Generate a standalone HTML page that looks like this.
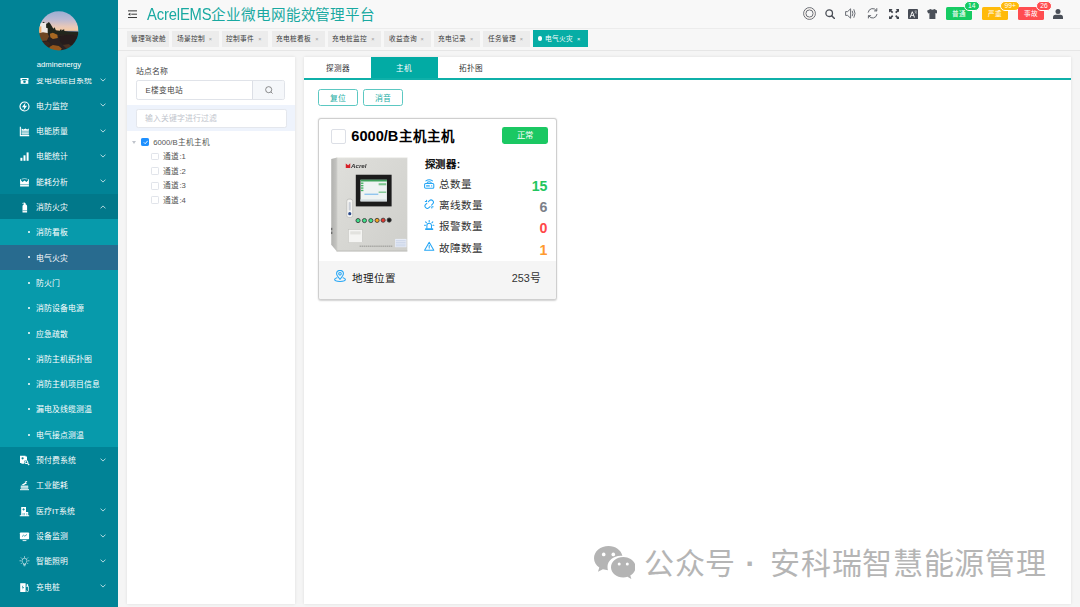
<!DOCTYPE html>
<html lang="zh-CN">
<head>
<meta charset="utf-8">
<title>AcrelEMS企业微电网能效管理平台</title>
<style>
*{box-sizing:border-box;margin:0;padding:0}
html,body{width:1080px;height:607px;overflow:hidden}
body{position:relative;background:#f5f5f5;font-family:"Liberation Sans",sans-serif;color:#303133;-webkit-font-smoothing:antialiased}
.abs{position:absolute}
/* ---------- sidebar ---------- */
#side{position:absolute;left:0;top:0;width:118px;height:607px;background:#018396;overflow:hidden}
#avatar{position:absolute;left:39.2px;top:11px;width:39.6px;height:39.6px}
#uname{position:absolute;left:0;top:60.1px;width:118px;text-align:center;color:#fff;font-size:7.7px;line-height:10px}
#menuclip{position:absolute;left:0;top:78.4px;width:118px;height:530px;overflow:hidden}
#menu{position:absolute;left:0;top:-11px;width:118px;list-style:none}
#menu li{position:relative;height:25.3125px;line-height:25.3125px;color:#fff;font-weight:500;font-size:7.875px;white-space:nowrap}
#menu li .ic{position:absolute;left:18.5px;top:7.9px;width:11px;height:11px}
#menu li .tx{position:absolute;left:36px;top:1px}
#menu li .ar{position:absolute;left:100.4px;top:10.7px;width:6px;height:4px}
#menu li.open{background:#01788a}
#menu li.sub{background:#079aab}
#menu li.sub .tx{left:36px}
#menu li.sub .dot{position:absolute;left:27.6px;top:11.8px;width:2px;height:2px;border-radius:50%;background:#fff}
#menu li.act{background:#286b8f}
/* ---------- header ---------- */
#head{position:absolute;left:118px;top:0;width:962px;height:28.5px;background:#f8f8f8;border-bottom:1px solid #ececec}
#title{position:absolute;left:29px;top:4.5px;font-size:14.6px;line-height:20px;color:#19a9a1;white-space:nowrap;letter-spacing:-.15px}
#tabs{position:absolute;left:118px;top:28.5px;width:962px;height:22px;background:#f7f7f7;border-bottom:1px solid #e6e6e6}
.tab{position:absolute;top:2px;height:16.4px;line-height:16.4px;background:#ececec;font-size:6.7px;color:#3a3a3a;white-space:nowrap;padding-left:4.5px}
.tab i{font-style:normal;color:#9a9a9a;font-size:5.6px;margin-left:4px}
.tab.on{background:#06ada5;color:#fff}
.tab.on i{color:#fff}
/* ---------- panels ---------- */
#lp{position:absolute;left:126.8px;top:56.9px;width:168.3px;height:547.2px;background:#fff;box-shadow:0 0 3px rgba(0,0,0,.10)}
#rp{position:absolute;left:304.4px;top:56.7px;width:767px;height:547.4px;background:#fff;box-shadow:0 0 3px rgba(0,0,0,.10)}

/* header icons */
#head svg{position:absolute}
.bdg{position:absolute;top:6.9px;height:13px;width:25.7px;border-radius:1.6px;color:#fff;font-size:6.6px;line-height:13px;text-align:center}
.pill{position:absolute;top:1.4px;height:9.4px;border-radius:5px;border:.7px solid #fff;color:#fff;font-size:6.7px;line-height:8.1px;text-align:center;padding:0 3.1px}
/* left panel */
#lp .lab{position:absolute;left:9px;top:10.6px;font-size:7.875px;line-height:10px;color:#444}
#lp .in1{position:absolute;left:9px;top:22.8px;width:149px;height:20.2px;border:.6px solid #e0e3e9;border-radius:2.3px;background:#fff;overflow:hidden}
#lp .in1 .v{position:absolute;left:8.6px;top:.6px;line-height:19.4px;font-size:7.7px;color:#444}
#lp .in1 .btn{position:absolute;right:0;top:0;width:32px;height:20px;background:#f5f7fa;border-left:.6px solid #dcdfe6}
#lp .band{position:absolute;left:0;top:48.6px;width:168.5px;height:25.6px;background:#eef3fc}
#lp .in2{position:absolute;left:9px;top:3.1px;width:151.4px;height:19.7px;border:.6px solid #e4e7ed;border-radius:2.3px;background:#fff;font-size:7.875px;line-height:18px;color:#c0c4cc;padding-left:8.6px}
.trow{position:absolute;left:0;width:168px;height:14.6px;line-height:14.6px;font-size:7.7px;color:#555;white-space:nowrap}
.trow .cb{position:absolute;top:3.4px;width:7.8px;height:7.8px;border:.5px solid #e1e4ea;border-radius:1.2px;background:#fff}
.trow .cb.ck{background:#1e90ff;border-color:#1e90ff}
.trow .t{position:absolute;top:1.1px}
/* right panel */
#rp .tb{position:absolute;top:0;height:21.6px;width:67px;padding-top:1.5px;line-height:22.6px;text-align:center;font-size:7.6px;color:#303133}
#rp .tb.on{background:#02aba4;color:#fff}
#rp .tl{position:absolute;left:0;top:21.4px;width:767px;height:1.8px;background:#0fb0a9}
.pbtn{position:absolute;top:32.6px;height:17.2px;width:39.8px;border:.7px solid #5cc8c2;border-radius:2.6px;color:#1aada5;font-size:7.875px;line-height:17.2px;text-align:center;background:#fff}
/* card */
#card{position:absolute;left:13.9px;top:61px;width:238.4px;height:182px;border:.8px solid #cfcfcf;border-radius:3px;background:#fff;box-shadow:0 .6px 1.6px rgba(0,0,0,.18);overflow:hidden}
#card .ccb{position:absolute;left:12px;top:10px;width:15px;height:15px;border:.7px solid #dcdfe6;border-radius:2px;background:#fff}
#card .ttl{position:absolute;left:32px;top:7.5px;font-size:14.6px;font-weight:bold;color:#000;line-height:20px;white-space:nowrap}
#card .tag{position:absolute;left:183px;top:8.4px;width:45.7px;height:17px;border-radius:2.4px;background:#1bc863;color:#fff;font-size:8.4px;line-height:17px;text-align:center}
#card .dt{position:absolute;left:105.4px;top:39px;font-size:10.4px;letter-spacing:.7px;font-weight:bold;color:#111;line-height:14px}
.row{position:absolute;left:105.4px;width:123.2px;height:21.4px}
.row svg{position:absolute;left:-.5px;top:5px;width:10.4px;height:10.4px}
.row .k{position:absolute;left:14.5px;top:2.9px;font-family:"Liberation Serif",serif;font-size:10.6px;line-height:15px;color:#333;white-space:nowrap}
.row .n{position:absolute;right:.4px;top:2.8px;font-size:14.2px;font-weight:bold;line-height:18px}
#card .ft{position:absolute;left:0;top:142.5px;width:238px;height:39.5px;background:#f5f5f5}
#card .ft svg{position:absolute;left:15.2px;top:9.1px;width:12px;height:12px}
#card .ft .k{position:absolute;left:32.6px;top:9.9px;font-family:"Liberation Serif",serif;font-size:10.6px;line-height:15px;color:#222}
#card .ft .v{position:absolute;right:16.6px;top:10px;font-size:10.8px;line-height:15px;color:#333}
/* watermark */
#wm{position:absolute;left:644.1px;top:546.3px;font-size:30px;line-height:36px;color:#b5b5b5;white-space:nowrap;letter-spacing:.7px}
#wmi{position:absolute;left:593.6px;top:545.6px;width:41.6px;height:33.4px}
</style>
</head>
<body>

<!-- ================= SIDEBAR ================= -->
<div id="side">
  <svg id="avatar" viewBox="0 0 40 40">
    <defs>
      <clipPath id="avc"><circle cx="20" cy="20" r="19.8"/></clipPath>
      <linearGradient id="sky" x1="0" y1="0" x2="0" y2="1">
        <stop offset="0" stop-color="#9aaed2"/><stop offset=".4" stop-color="#bcbad2"/><stop offset=".7" stop-color="#e8c8b8"/><stop offset=".9" stop-color="#f8cba0"/><stop offset="1" stop-color="#f0b888"/>
      </linearGradient>
      <filter id="avb" x="-10%" y="-10%" width="120%" height="120%"><feGaussianBlur stdDeviation=".8"/></filter>
    </defs>
    <g clip-path="url(#avc)">
      <rect width="40" height="22.5" fill="url(#sky)"/>
      <g filter="url(#avb)" transform="translate(0 1.4)">
        <rect x="26" y="18.600" width="14" height="2" fill="#7d8ea8"/>
        <rect x="-2" y="19.600" width="44" height="22" fill="#2b2320"/>
        <path d="M2 20L3.500 10.500L5 9.500L6.500 12L8.500 11L10 9.800L11.500 11.500L13 14L14.500 16.500L15.800 15L17 18L21 18.600L21.500 17.200H22.800V18.600L24.200 17.400H25.600V18.800L30 19.200L40 19.800V22H2Z" fill="#23261f"/>
        <path d="M.6 12L2.400 10.800H7.200V15.500L8.800 16V21H.6Z" fill="#efe9e6"/>
        <path d="M0 14.500L2.400 14V20.500H0Z" fill="#f2b070"/>
        <path d="M0 21L4 20L8.500 20.800L10 24L8 28.500L3 29L0 27Z" fill="#6e4424"/>
        <path d="M11 21.500L14 20.500L18.500 22.500L19 26L14 27L11.500 25Z" fill="#a86824"/>
        <path d="M10.500 35L14 33L20 34L23 36.500L21 40H11Z" fill="#94561e"/>
        <path d="M20 24L30 22.500L40 24V33L30 36L22 31Z" fill="#251e1c"/>
        <path d="M24 33L30 32L33 34L28 37Z" fill="#4a3020"/>
        <path d="M3 30L9 29.500L12 32L8 36L4 35Z" fill="#3a261a"/>
      </g>
    </g>
  </svg>
  <div id="uname">adminenergy</div>
  <div id="menuclip">
  <ul id="menu">
    <li><svg class="ic" viewBox="0 0 11 11"><path d="M1.300 4.200Q1.300 2.600 3 2.600H8Q9.700 2.600 9.700 4.200L9.400 5H7.800V4H3.200V5H1.600Z" fill="#fff"/><path d="M1.700 5.200H9.300V8.800H1.700Z" fill="#fff"/><circle cx="5.500" cy="6.800" r="1.300" fill="#018396"/></svg><span class="tx">变电站综自系统</span><svg class="ar" viewBox="0 0 6 4"><path d="M.5 .6L3 3.100L5.500 .6" fill="none" stroke="#fff" stroke-width=".7"/></svg></li>
    <li><svg class="ic" viewBox="0 0 11 11"><circle cx="5.500" cy="5.500" r="4.500" fill="none" stroke="#fff" stroke-width="1.2"/><path d="M6.600 1.500L2.900 6.200H5.200L4.400 9.500L8.100 4.800H5.800Z" fill="#fff"/></svg><span class="tx">电力监控</span><svg class="ar" viewBox="0 0 6 4"><path d="M.5 .6L3 3.100L5.500 .6" fill="none" stroke="#fff" stroke-width=".7"/></svg></li>
    <li><svg class="ic" viewBox="0 0 11 11"><path d="M.8 .8H1.900V9.100H10.200V10.200H.8Z" fill="#fff"/><path d="M2.600 2.400L4.500 3.600L6.400 2.600L8.200 3.400L9.800 2.400V8.400H2.600Z" fill="#fff"/><path d="M2.600 5.200H9.800M2.600 6.900H9.800" stroke="#018396" stroke-width=".6"/></svg><span class="tx">电能质量</span><svg class="ar" viewBox="0 0 6 4"><path d="M.5 .6L3 3.100L5.500 .6" fill="none" stroke="#fff" stroke-width=".7"/></svg></li>
    <li><svg class="ic" viewBox="0 0 11 11"><rect x="1.400" y="6.800" width="2" height="3" fill="#fff"/><rect x="4.500" y="4.300" width="2" height="5.500" fill="#fff"/><rect x="7.600" y="1.400" width="2" height="8.400" fill="#fff"/></svg><span class="tx">电能统计</span><svg class="ar" viewBox="0 0 6 4"><path d="M.5 .6L3 3.100L5.500 .6" fill="none" stroke="#fff" stroke-width=".7"/></svg></li>
    <li><svg class="ic" viewBox="0 0 11 11"><path d="M1.100 2.200H2V3.600L3.600 5L5.500 3.400L7.400 5L9 3.600V2.200H9.900V9.400H1.100Z" fill="#fff"/><path d="M1.100 7.600H9.900" stroke="#018396" stroke-width=".5"/><path d="M2.600 2.200L5.500 1.500L8.400 2.200" stroke="#fff" stroke-width=".6" fill="none"/></svg><span class="tx">能耗分析</span><svg class="ar" viewBox="0 0 6 4"><path d="M.5 .6L3 3.100L5.500 .6" fill="none" stroke="#fff" stroke-width=".7"/></svg></li>
    <li class="open"><svg class="ic" viewBox="0 0 11 11"><path d="M3.300 .9L5.500 .4L6.600 1.300V2.200Q8.100 2.600 8.100 4.200V10.400H3.500V4.200Q3.500 2.600 5 2.200V1.500L3.500 1.700Z" fill="#fff"/><path d="M3.500 8.600H8.100" stroke="#01788a" stroke-width=".5"/></svg><span class="tx">消防火灾</span><svg class="ar" viewBox="0 0 6 4"><path d="M.5 3.400L3 .9L5.500 3.400" fill="none" stroke="#fff" stroke-width=".7"/></svg></li>
    <li class="sub"><span class="dot"></span><span class="tx">消防看板</span></li>
    <li class="sub act"><span class="dot"></span><span class="tx">电气火灾</span></li>
    <li class="sub"><span class="dot"></span><span class="tx">防火门</span></li>
    <li class="sub"><span class="dot"></span><span class="tx">消防设备电源</span></li>
    <li class="sub"><span class="dot"></span><span class="tx">应急疏散</span></li>
    <li class="sub"><span class="dot"></span><span class="tx">消防主机拓扑图</span></li>
    <li class="sub"><span class="dot"></span><span class="tx">消防主机项目信息</span></li>
    <li class="sub"><span class="dot"></span><span class="tx">漏电及线缆测温</span></li>
    <li class="sub"><span class="dot"></span><span class="tx">电气接点测温</span></li>
    <li><svg class="ic" viewBox="0 0 11 11"><path d="M1 .8H6.600V1.600H8V5.200Q5.500 4.600 5 7Q4.900 8 5.400 8.800H2.400V8H1Z" fill="#fff"/><circle cx="7.400" cy="7.200" r="1.900" fill="#fff"/><path d="M8.600 8.400L10.200 10" stroke="#fff" stroke-width="1.200"/><circle cx="3.600" cy="3.300" r="1.100" fill="#018396"/><circle cx="7.400" cy="7.200" r=".9" fill="#018396"/></svg><span class="tx">预付费系统</span><svg class="ar" viewBox="0 0 6 4"><path d="M.5 .6L3 3.100L5.500 .6" fill="none" stroke="#fff" stroke-width=".7"/></svg></li>
    <li><svg class="ic" viewBox="0 0 11 11"><path d="M1 9.200H10V10.200H1Z" fill="#fff"/><path d="M1.800 5.600H9.200V8.600H1.800Z" fill="#fff"/><path d="M2.600 4.800L6.800 2.200L8 3.200L4.400 5.200Z" fill="#fff"/><path d="M5.600 1.800L7.800 .9L8.300 1.700L6.200 2.700Z" fill="#fff"/><path d="M1.800 7.100H9.200" stroke="#018396" stroke-width=".5"/></svg><span class="tx">工业能耗</span></li>
    <li><svg class="ic" viewBox="0 0 11 11"><path d="M2.200 .9H7V6H9.200V9.300H10.200V10.200H.8V9.300H2.200Z" fill="#fff"/><path d="M4.600 2.200V4.600M3.400 3.400H5.800" stroke="#018396" stroke-width=".8"/><path d="M4 7V9.300M5.400 7V9.300M7.800 7.200V9.300" stroke="#018396" stroke-width=".5"/></svg><span class="tx">医疗IT系统</span><svg class="ar" viewBox="0 0 6 4"><path d="M.5 .6L3 3.100L5.500 .6" fill="none" stroke="#fff" stroke-width=".7"/></svg></li>
    <li><svg class="ic" viewBox="0 0 11 11"><rect x=".9" y="1.500" width="9.200" height="6.800" rx=".8" fill="#fff"/><path d="M3.600 9.600H7.400" stroke="#fff" stroke-width=".9"/><path d="M3 5.600L4.600 4.200L5.800 5.200L8 3.400" stroke="#018396" stroke-width=".7" fill="none"/></svg><span class="tx">设备监测</span><svg class="ar" viewBox="0 0 6 4"><path d="M.5 .6L3 3.100L5.500 .6" fill="none" stroke="#fff" stroke-width=".7"/></svg></li>
    <li><svg class="ic" viewBox="0 0 11 11"><g fill="none" stroke="#fff" stroke-width=".6" stroke-linecap="round"><path d="M4.300 7.800V7Q3 6.200 3 4.800A2.500 2.500 0 0 1 8 4.800Q8 6.200 6.700 7V7.800Z"/><path d="M4.600 8.800H6.400M5.100 9.800H5.900"/><path d="M5.500 .6V1.400M2.200 1.800L2.800 2.400M8.800 1.800L8.200 2.400M.9 4.800H1.700M10.100 4.800H9.300M2.200 7.600L2.800 7M8.800 7.600L8.200 7"/></g></svg><span class="tx">智能照明</span><svg class="ar" viewBox="0 0 6 4"><path d="M.5 .6L3 3.100L5.500 .6" fill="none" stroke="#fff" stroke-width=".7"/></svg></li>
    <li><svg class="ic" viewBox="0 0 11 11"><path d="M1.200 1.200H6.600V10H1.200Z" fill="#fff"/><path d="M4.200 3L2.800 5.600H3.900L3.400 7.800L5 5H3.900Z" fill="#018396"/><path d="M7.400 4.400H9.400V8.600Q9.400 9.600 8.400 9.600T7.400 8.600" fill="none" stroke="#fff" stroke-width=".8"/><path d="M8.400 2.200V4.400" stroke="#fff" stroke-width="1.400"/></svg><span class="tx">充电桩</span><svg class="ar" viewBox="0 0 6 4"><path d="M.5 .6L3 3.100L5.500 .6" fill="none" stroke="#fff" stroke-width=".7"/></svg></li>
  </ul>
  </div>
</div>

<!-- ================= HEADER ================= -->
<div id="head">
  <div id="title"><span style="display:inline-block;font-size:15.7px;transform:scaleX(.94);transform-origin:0 50%;margin-right:-4.1px">AcrelEMS</span>企业微电网能效管理平台</div>

  <!-- hamburger -->
  <svg style="left:9.8px;top:10.2px;width:9.2px;height:8.4px" viewBox="0 0 9.4 8.4"><g stroke="#333" stroke-width="1" fill="none"><path d="M0 .8H9.4M3.4 4.2H9.4M0 7.6H9.4"/></g><path d="M0 4.2L2.4 2.7V5.7Z" fill="#333"/></svg>
  <!-- lifebuoy -->
  <svg style="left:684.6px;top:7px;width:13px;height:13px" viewBox="0 0 13 13"><g fill="none" stroke="#5a5e66" stroke-width=".9"><circle cx="6.5" cy="6.5" r="5.9"/><circle cx="6.5" cy="6.5" r="3.6"/></g><g stroke="#eadfd2" stroke-width=".5" fill="none"><circle cx="6.5" cy="6.5" r="4.8"/></g></svg>
  <!-- search -->
  <svg style="left:707px;top:9px;width:10.4px;height:10.4px" viewBox="0 0 10.4 10.4"><circle cx="4.2" cy="4.2" r="3.3" fill="none" stroke="#4a4e56" stroke-width="1.3"/><path d="M6.7 6.7L9.8 9.8" stroke="#4a4e56" stroke-width="1.5" stroke-linecap="round"/></svg>
  <!-- volume -->
  <svg style="left:727.4px;top:8px;width:12px;height:11px" viewBox="0 0 12 11"><path d="M.6 3.6H2.6L5.6 .8V10.2L2.6 7.4H.6Z" fill="none" stroke="#5a5e66" stroke-width=".9" stroke-linejoin="round"/><path d="M7.4 3.2Q8.6 5.5 7.4 7.8M9 1.6Q11.2 5.5 9 9.4" fill="none" stroke="#5a5e66" stroke-width=".9" stroke-linecap="round"/></svg>
  <!-- refresh -->
  <svg style="left:749.2px;top:8.4px;width:11.2px;height:10.6px" viewBox="0 0 11.2 10.6"><g fill="none" stroke="#5a5e66" stroke-width=".95" stroke-linecap="round"><path d="M1.2 4.2A4.5 4.5 0 0 1 9.4 2.6"/><path d="M10 6.4A4.5 4.5 0 0 1 1.8 8"/><path d="M9.8 .6V2.9H7.5M1.4 10V7.7H3.7"/></g></svg>
  <!-- fullscreen -->
  <svg style="left:770.6px;top:8.8px;width:10.4px;height:10.4px" viewBox="0 0 10.4 10.4"><g fill="#3f434b"><path d="M0 0H3.6L2.4 1.2L4.3 3.1L3.1 4.3L1.2 2.4L0 3.6Z"/><path d="M10.4 0V3.6L9.2 2.4L7.3 4.3L6.1 3.1L8 1.2L6.8 0Z"/><path d="M0 10.4V6.8L1.2 8L3.1 6.1L4.3 7.3L2.4 9.2L3.6 10.4Z"/><path d="M10.4 10.4H6.8L8 9.2L6.1 7.3L7.3 6.1L9.2 8L10.4 6.8Z"/></g></svg>
  <!-- font size -->
  <svg style="left:790px;top:8.8px;width:10.2px;height:10.2px" viewBox="0 0 10.2 10.2"><rect width="10.2" height="10.2" rx="1.2" fill="#474c55"/><path d="M1.6 8.4L3.9 2.4H4.7L7 8.4H6L5.4 6.8H3.2L2.6 8.4ZM3.5 6H5.1L4.3 3.7Z" fill="#fff"/><path d="M6.6 2.2H9M7.8 1.6V2.2M7 2.9L8.7 4.6M8.7 2.9L7 4.6" stroke="#fff" stroke-width=".45" fill="none"/></svg>
  <!-- t-shirt -->
  <svg style="left:808.6px;top:8.8px;width:10.8px;height:10.2px" viewBox="0 0 10.8 10.2"><path d="M3.4 0Q5.4 1.6 7.4 0L10.8 1.8L9.6 4.6L8.4 4.1V10.2H2.4V4.1L1.2 4.6L0 1.8Z" fill="#4a4f58"/></svg>
  <!-- badges -->
  <div class="bdg" style="left:828.2px;background:#16cb63">普通</div>
  <div class="pill" style="left:845.9px;background:#16cb63">14</div>
  <div class="bdg" style="left:864px;background:#ffba0a">严重</div>
  <div class="pill" style="left:882.4px;background:#ffba0a">99+</div>
  <div class="bdg" style="left:900.2px;background:#ff4d50">事故</div>
  <div class="pill" style="left:918.2px;background:#ff4d50">26</div>
  <!-- user -->
  <svg style="left:935px;top:9px;width:10px;height:10px" viewBox="0 0 10 10"><circle cx="5" cy="2.6" r="2.5" fill="#4a4f58"/><path d="M0 10V8.4Q0 5.8 2.6 5.8H7.4Q10 5.8 10 8.4V10Z" fill="#4a4f58"/></svg>
</div>
<div id="tabs">
  <span class="tab" style="left:8.7px;width:42.6px">管理驾驶舱</span>
  <span class="tab" style="left:54.2px;width:46.7px">场景控制<i>×</i></span>
  <span class="tab" style="left:103.8px;width:46.7px">控制事件<i>×</i></span>
  <span class="tab" style="left:153.8px;width:53.4px">充电桩看板<i>×</i></span>
  <span class="tab" style="left:209.8px;width:53.4px">充电桩监控<i>×</i></span>
  <span class="tab" style="left:266px;width:46.7px">收益查询<i>×</i></span>
  <span class="tab" style="left:315.6px;width:46.7px">充电记录<i>×</i></span>
  <span class="tab" style="left:365.2px;width:46.7px">任务管理<i>×</i></span>
  <span class="tab on" style="left:415px;width:55px;padding-left:12.1px;top:1.5px;height:17.1px;line-height:17.4px"><b style="position:absolute;left:4.5px;top:6.3px;width:4.4px;height:4.4px;border-radius:50%;background:#fff;display:block"></b>电气火灾<i>×</i></span>
</div>

<!-- ================= PANELS ================= -->
<div id="lp">
  <div class="lab">站点名称</div>
  <div class="in1"><span class="v">E楼变电站</span><span class="btn"><svg style="position:absolute;left:11.8px;top:5.6px;width:8px;height:8px" viewBox="0 0 7.6 7.6"><circle cx="3.5" cy="3.5" r="2.9" fill="none" stroke="#666" stroke-width=".7"/><path d="M5.6 5.6L7.2 7.2" stroke="#666" stroke-width=".7"/></svg></span></div>
  <div class="band"><div class="in2">输入关键字进行过滤</div></div>
  <div class="trow" style="top:77.8px"><svg style="position:absolute;left:5.6px;top:6px;width:4px;height:3px" viewBox="0 0 4 3"><path d="M0 0H4L2 3Z" fill="#c0c4cc"/></svg><span class="cb ck" style="left:14.2px"><svg style="position:absolute;left:.6px;top:.8px;width:5.4px;height:4.6px" viewBox="0 0 5.4 4.6"><path d="M.8 2.3L2.2 3.7L4.7 .8" fill="none" stroke="#fff" stroke-width=".9"/></svg></span><span class="t" style="left:26.4px">6000/B主机主机</span></div>
  <div class="trow" style="top:92.3px"><span class="cb" style="left:24.2px"></span><span class="t" style="left:36.6px">通道:1</span></div>
  <div class="trow" style="top:106.9px"><span class="cb" style="left:24.2px"></span><span class="t" style="left:36.6px">通道:2</span></div>
  <div class="trow" style="top:121.5px"><span class="cb" style="left:24.2px"></span><span class="t" style="left:36.6px">通道:3</span></div>
  <div class="trow" style="top:136.1px"><span class="cb" style="left:24.2px"></span><span class="t" style="left:36.6px">通道:4</span></div>
</div>
<div id="rp">
  <div class="tb" style="left:0">探测器</div>
  <div class="tb on" style="left:66.6px">主机</div>
  <div class="tb" style="left:133.6px">拓扑图</div>
  <div class="tl"></div>
  <div class="pbtn" style="left:13.8px">复位</div>
  <div class="pbtn" style="left:58.8px">消音</div>
  <div id="card">
    <span class="ccb"></span>
    <div class="ttl">6000/B<span style="font-size:13.4px;letter-spacing:1px;margin-left:.6px">主机主机</span></div>
    <div class="tag">正常</div>
    <svg style="position:absolute;left:5.9px;top:31.8px;width:100px;height:105px" viewBox="0 0 578 607">
      <defs>
        <linearGradient id="cf" x1="0" y1="0" x2="1" y2="1"><stop offset="0" stop-color="#dfdfdb"/><stop offset="1" stop-color="#cfcfcb"/></linearGradient>
        <linearGradient id="cs" x1="0" y1="0" x2="1" y2="0"><stop offset="0" stop-color="#b2b2af"/><stop offset="1" stop-color="#c6c6c3"/></linearGradient>
        <filter id="bl" x="-5%" y="-5%" width="110%" height="110%"><feGaussianBlur stdDeviation="2.2"/></filter>
      </defs>
      <g filter="url(#bl)">
        <path d="M36 52L70 44V588L36 548Z" fill="url(#cs)"/>
        <path d="M68 44H476V586H68Z" fill="url(#cf)"/>
        <path d="M68 44H476" stroke="#f2f2ef" stroke-width="5"/>
        <path d="M68 584H476" stroke="#b8b8b4" stroke-width="5"/>
        <path d="M69 44V586" stroke="#c4c4c0" stroke-width="3"/>
        <!-- logo -->
        <path d="M120 78L134 88L146 76V104H120Z" fill="#d8232a"/>
        <text x="150" y="104" font-family="Liberation Sans, sans-serif" font-size="36" font-weight="bold" font-style="italic" fill="#333">Acrel</text>
        <!-- screen -->
        <rect x="178" y="143" width="207" height="183" fill="#1b1b1d"/>
        <rect x="205" y="172" width="153" height="125" fill="#eef3f3"/>
        <rect x="205" y="172" width="153" height="10" fill="#3ea05a"/>
        <rect x="208" y="188" width="14" height="8" fill="#45b565"/><rect x="208" y="202" width="14" height="8" fill="#45b565"/><rect x="208" y="216" width="14" height="8" fill="#45b565"/><rect x="208" y="230" width="14" height="8" fill="#45b565"/>
        <rect x="310" y="192" width="44" height="12" fill="#7cc58e"/><rect x="310" y="240" width="44" height="8" fill="#7cc58e"/>
        <rect x="228" y="252" width="80" height="8" fill="#8fc4ee"/>
        <rect x="205" y="285" width="153" height="12" fill="#d5dde0"/>
        <!-- handle -->
        <rect x="126" y="284" width="34" height="106" rx="12" fill="#f4f4f2" stroke="#a9a9a6" stroke-width="3"/>
        <rect x="137" y="300" width="12" height="50" rx="5" fill="#c9ced6"/>
        <circle cx="143" cy="368" r="9" fill="#2a4a8a"/>
        <!-- lights -->
        <g stroke="#3a3a3a" stroke-width="5"><circle cx="191" cy="408" r="12" fill="#3fe08a"/><circle cx="228" cy="408" r="12" fill="#3fe08a"/><circle cx="265" cy="408" r="12" fill="#3fe08a"/><circle cx="301" cy="407" r="12" fill="#f5a623"/><circle cx="336" cy="406" r="12" fill="#e8392f"/><circle cx="371" cy="405" r="12" fill="#1b1b1b"/></g>
        <!-- printer -->
        <rect x="136" y="460" width="80" height="76" fill="#f4f4f2" stroke="#bdbdb9" stroke-width="2.5"/>
        <rect x="146" y="470" width="60" height="18" fill="#e2e2de"/>
        <!-- label -->
        <rect x="405" y="514" width="66" height="48" fill="#e6ebf6"/>
        <path d="M410 524H466M410 534H466M410 544H466M410 554H466" stroke="#b4c0dc" stroke-width="3"/>
        <path d="M200 556H392" stroke="#8c8c88" stroke-width="5" stroke-dasharray="9 3"/>
        <rect x="36" y="450" width="6" height="14" fill="#555"/><rect x="36" y="472" width="6" height="14" fill="#555"/>
      </g>
    </svg>
    <div class="dt">探测器:</div>
    <div class="row" style="top:55.6px"><svg viewBox="0 0 10.4 10.4" style="top:4.4px"><g fill="none" stroke="#25a6f5" stroke-width="1.05" stroke-linecap="round"><rect x=".6" y="4.5" width="9.2" height="4.8" rx="1"/><path d="M2.500 6.900H5.400M7.600 6.900H7.800"/><path d="M1.900 1.900Q5.200 -.500 8.500 1.900M3.300 3.400Q5.200 2 7.100 3.400"/></g></svg><span class="k">总数量</span><span class="n" style="color:#22c55e">15</span></div>
    <div class="row" style="top:76.4px"><svg viewBox="0 0 10.4 10.4" style="top:3.5px"><g fill="none" stroke="#25a6f5" stroke-width="1.05" stroke-linecap="round"><path d="M4.300 2.800L5.400 1.700A2.300 2.300 0 0 1 8.700 5L7.600 6.100"/><path d="M6.100 7.600L5 8.700A2.300 2.300 0 0 1 1.700 5.400L2.800 4.300"/><path d="M2.600 1.300V2.400M1.300 2.600H2.400M7.800 9.100V8M9.100 7.800H8"/></g></svg><span class="k">离线数量</span><span class="n" style="color:#7b8088">6</span></div>
    <div class="row" style="top:97.8px"><svg viewBox="0 0 10.4 10.4" style="top:3.4px"><g fill="none" stroke="#25a6f5" stroke-width="1.05" stroke-linecap="round"><path d="M2.900 8.300V5.600A2.300 2.300 0 0 1 7.500 5.600V8.300"/><path d="M1.700 8.700H8.700V9.700H1.700Z" stroke-linejoin="round"/><path d="M5.200 .500V1.700M1.600 1.900L2.500 2.800M8.800 1.900L7.900 2.800M.500 5.200H1.500M9.900 5.200H8.900"/></g></svg><span class="k">报警数量</span><span class="n" style="color:#ff4848">0</span></div>
    <div class="row" style="top:119.5px"><svg viewBox="0 0 10.4 10.4" style="top:2.9px"><g fill="none" stroke="#25a6f5" stroke-width="1.05" stroke-linecap="round" stroke-linejoin="round"><path d="M5.200 1.300L9.800 9.200H.600Z"/><path d="M5.200 4.300V6.500M5.200 7.700V7.800"/></g></svg><span class="k">故障数量</span><span class="n" style="color:#ff9a2e">1</span></div>
    <div class="ft"><svg viewBox="0 0 12 12"><g fill="none" stroke="#25a6f5" stroke-width="1.05" stroke-linecap="round" stroke-linejoin="round"><path d="M6 9.300C3.800 6.800 2.600 5.500 2.600 3.800A3.400 3.400 0 0 1 9.400 3.800C9.400 5.500 8.200 6.800 6 9.300Z"/><circle cx="6" cy="3.800" r="1.300"/><path d="M3 7.800C1.400 8.200 .600 8.900 .600 9.600C.600 10.700 3 11.400 6 11.400S11.400 10.700 11.400 9.600C11.400 8.900 10.600 8.200 9 7.800"/></g></svg><span class="k">地理位置</span><span class="v">253号</span></div>
  </div>
</div>
<!-- watermark -->
<svg id="wmi" viewBox="0 0 41.6 32.6" preserveAspectRatio="none"><g fill="#b4b4b4"><path d="M14.6 0C6.5 0 0 5.3 0 11.9c0 3.7 2.1 7 5.3 9.2L4 25.2l4.9-2.5c1.7.5 3.3.8 5.1.9-.3-1-.5-2.100-.5-3.200 0-6.100 5.900-11 13.100-11 .6 0 1.200 0 1.800.1C27.100 4 21.400 0 14.600 0Z"/><path d="M41.600 20.700c0-5.500-5.500-10-12.300-10s-12.300 4.500-12.300 10 5.500 10 12.300 10c1.500 0 2.900-.2 4.200-.6l3.900 2.200-1.100-3.500c3.200-1.900 5.300-4.800 5.300-8.100Z"/></g><g fill="#fff"><circle cx="9.700" cy="8.200" r="1.800"/><circle cx="19.300" cy="8.200" r="1.800"/><circle cx="25.200" cy="17.600" r="1.500"/><circle cx="33.300" cy="17.600" r="1.500"/></g></svg>
<div id="wm">公众号<span style="margin:0 14.2px 0 9.2px;font-weight:bold">·</span>安科瑞智慧能源管理</div>

</body>
</html>
